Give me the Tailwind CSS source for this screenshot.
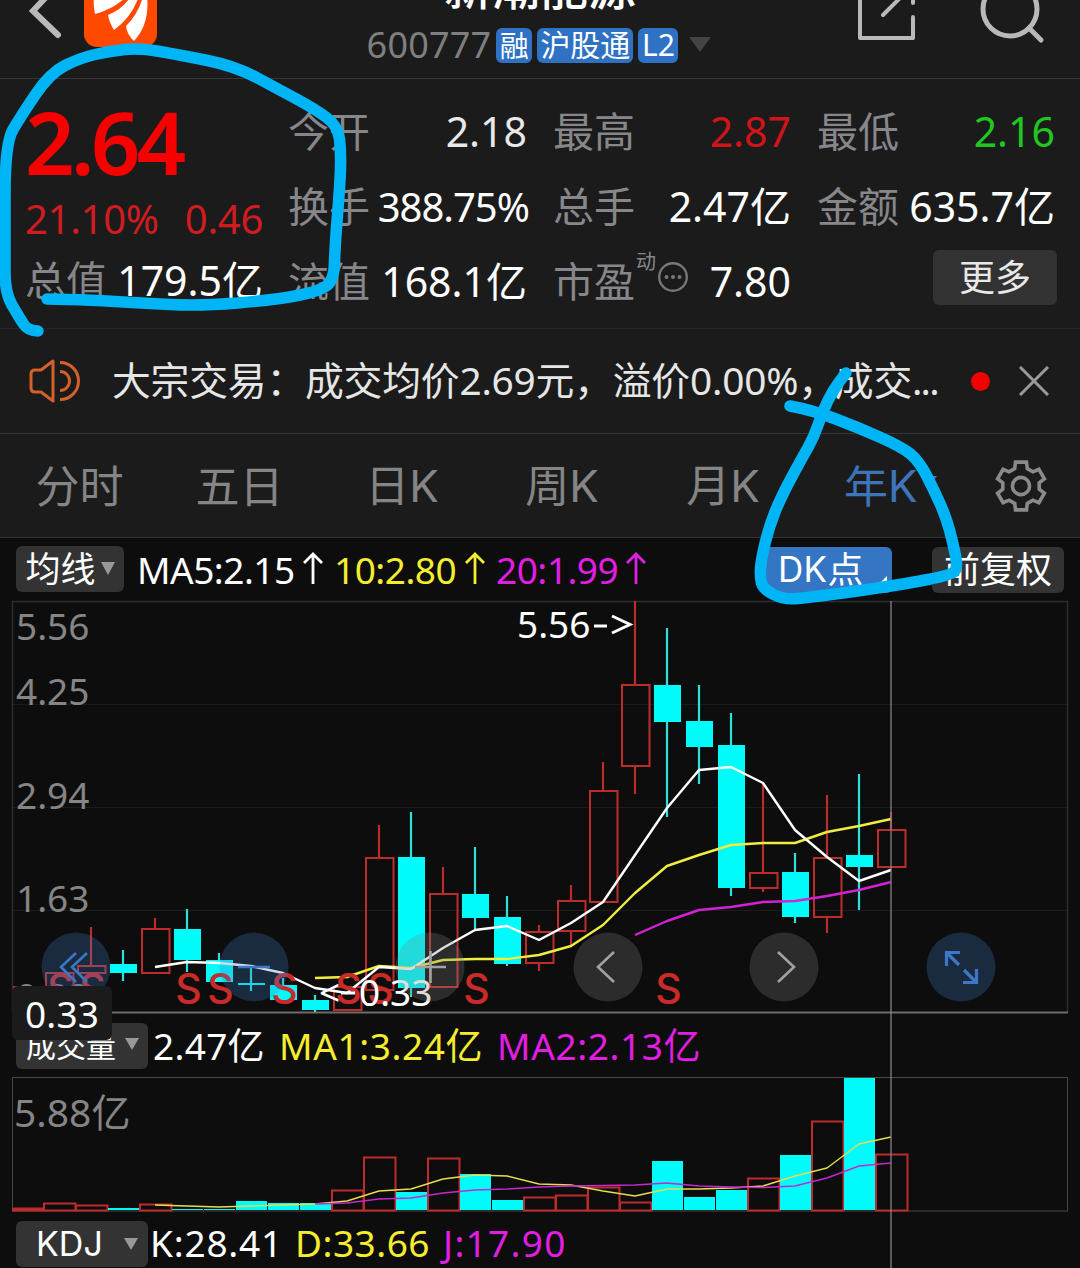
<!DOCTYPE html>
<html lang="zh-CN">
<head>
    <meta charset="UTF-8">
    <meta name="viewport" content="width=device-width, initial-scale=1.0">
    <title>新潮能源 600777</title>
    <script src="https://cdn.jsdelivr.net/npm/@tailwindcss/browser@4"></script>
</head>
<body class="bg-[#0d0d0d]">
    <div class="relative w-[1080px] h-[1268px] overflow-hidden bg-[#0d0d0d] text-white font-['Noto_Sans','Noto_Sans_CJK_SC',sans-serif] whitespace-nowrap">

        <!-- Header -->
        <header class="flex justify-between h-[79px] bg-[#1b1b1b] border-b border-[#383838] overflow-hidden">
            <svg class="w-[360px] h-[78px]" viewBox="0 0 360 78" fill="none">
                <path d="M62 -20L33 11L58 35" stroke="#b9b9b9" stroke-width="6" stroke-linecap="round"/>
                <rect x="84" y="-26" width="73" height="73" rx="13" fill="#ff4800"/>
                <path d="M94 -4Q93 5 95 14Q114 9 127 -4Z" fill="#fff"/>
                <path d="M131 -4Q123 9 108 15Q109 22 114 30Q132 17 139 -4Z" fill="#fff"/>
                <path d="M143 -4Q139 13 126 26Q127 35 134 41Q150 24 147 -4Z" fill="#fff"/>
            </svg>
            <div class="flex flex-col items-center w-[350px] shrink-0">
                <h1 class="text-5xl leading-[60px] h-[60px] -mt-[43px] font-medium">新潮能源</h1>
                <div class="flex items-center mt-[10px] gap-[5px] text-[29px] leading-none">
                    <span class="text-[36px] text-[#7f7f7f] tracking-[0.2px]">600777</span>
                    <span class="flex items-center justify-center w-9 h-[35px] rounded-md bg-[#2f72c4]">融</span>
                    <span class="flex items-center justify-center w-24 h-[35px] rounded-md bg-[#2f72c4] text-[30px]">沪股通</span>
                    <span class="flex items-center justify-center w-10 h-[35px] rounded-md bg-[#2f72c4] text-[30px]">L2</span>
                    <svg class="w-[22px] h-4 ml-[6px] mr-[2px]" viewBox="0 0 22 16"><path d="M0 0H22L11 15Z" fill="#444"/></svg>
                </div>
            </div>
            <svg class="w-[360px] h-[78px]" viewBox="720 0 360 78" fill="none" stroke="#b9b9b9" stroke-width="4" stroke-linecap="round" stroke-linejoin="round">
                <path d="M860 -10V38H913V17M913 -10V3M883 15L905 -7"/>
                <circle cx="1010" cy="9" r="27" stroke-width="5"/>
                <path d="M1029 28L1041 40" stroke-width="5"/>
            </svg>
        </header>

        <!-- Quote -->
        <section class="flex h-[250px] px-[25px] gap-[26px] bg-[#1b1b1b] border-b border-[#272727] text-[41px] leading-none">
            <div class="w-[238px] pt-[23px]">
                <div class="h-[78px] leading-[78px] text-[87px] font-semibold text-[#f60000] tracking-[-4px]">2.64</div>
                <div class="flex justify-between h-[75px] leading-[77px] text-[#d01c20] text-[40px] tracking-[-0.3px]"><span>21.10%</span><span>0.46</span></div>
                <div class="flex justify-between h-[50px] leading-[50px]"><span class="text-[#87878b]">总值</span><span>179.5亿</span></div>
            </div>
            <div class="w-[238px] pt-[15px]">
                <div class="flex justify-between h-[75px] leading-[75px]"><span class="text-[#87878b] -ml-px">今开</span><span class="text-[#e8e8e8]">2.18</span></div>
                <div class="flex justify-between h-[75px] leading-[75px]"><span class="text-[#87878b] -ml-px">换手</span><span class="text-[40px] tracking-[-1px] -mr-[2px]">388.75%</span></div>
                <div class="flex justify-between h-[75px] leading-[75px]"><span class="text-[#87878b] -ml-px">流值</span><span>168.1亿</span></div>
            </div>
            <div class="w-[238px] pt-[15px]">
                <div class="flex justify-between h-[75px] leading-[75px]"><span class="text-[#87878b]">最高</span><span class="text-[#d01418]">2.87</span></div>
                <div class="flex justify-between h-[75px] leading-[75px]"><span class="text-[#87878b]">总手</span><span>2.47亿</span></div>
                <div class="flex h-[75px] leading-[75px]">
                    <span class="text-[#87878b]">市盈</span>
                    <span class="text-xl leading-[36px] text-[#87878b] ml-px">动</span>
                    <svg class="w-8 h-8 mt-[17px] ml-px" viewBox="0 0 32 32" fill="none" stroke="#77777a" stroke-width="2.4">
                        <circle cx="16" cy="16" r="13.8"/>
                        <path d="M9.5 16h.01M16 16h.01M22.5 16h.01" stroke-width="4" stroke-linecap="round"/>
                    </svg>
                    <span class="ml-auto">7.80</span>
                </div>
            </div>
            <div class="w-[238px] pt-[15px]">
                <div class="flex justify-between h-[75px] leading-[75px]"><span class="text-[#87878b]">最低</span><span class="text-[#1fc71f]">2.16</span></div>
                <div class="flex justify-between h-[75px] leading-[75px]"><span class="text-[#87878b]">金额</span><span>635.7亿</span></div>
                <button class="block ml-auto mt-[6px] -mr-[2px] w-[124px] h-[55px] rounded-md bg-[#323232] text-[36px] leading-[54px] text-[#e8e8e8]">更多</button>
            </div>
        </section>

        <!-- News -->
        <section class="flex items-center h-[105px] px-[28px] bg-[#1b1b1b] border-b border-[#363636]">
            <svg class="w-[54px] h-12" viewBox="0 0 54 48" fill="none" stroke="#d4602a" stroke-width="3" stroke-linejoin="round">
                <path d="M25 4L13 13H7Q3 13 3 17V31Q3 35 7 35H13L25 44Z"/>
                <path d="M32 5.500A18.500 18.500 0 0 1 32 42.500M32 14.500A9.500 9.500 0 0 1 32 33.500"/>
            </svg>
            <p class="w-[832px] ml-[30px] text-[38.8px] text-[#e6e6e6] tracking-[-0.2px] -mt-[2px]">大宗交易：<span>成交均价2.69元，</span><span>溢价0.00%，</span><span class="-ml-[2px]">成交</span><span class="tracking-[-1.8px]">...</span></p>
            <span class="w-[19px] h-[19px] ml-[27px] rounded-full bg-[#f40000]"></span>
            <svg class="w-[30px] h-[30px] ml-[29px]" viewBox="0 0 30 30" stroke="#9a9a9a" stroke-width="3"><path d="M1 1L29 29M29 1L1 29"/></svg>
        </section>

        <!-- Period tabs -->
        <nav class="flex items-center h-[104px] bg-[#1b1b1b] border-b border-[#333] text-[44px] leading-none text-[#858585]">
            <span class="w-[159px] text-center">分时</span>
            <span class="w-[161px] text-center">五日</span>
            <span class="w-[164px] text-center">日<span class="font-['Inter']">K</span></span>
            <span class="w-[156px] text-center">周<span class="font-['Inter']">K</span></span>
            <span class="w-[166px] text-center">月<span class="font-['Inter']">K</span></span>
            <span class="flex items-center w-[174px] pl-[38px] text-[#3d74ba]">年<span class="font-['Inter']">K</span><svg class="w-4 h-3 ml-[3px] -mt-2" viewBox="0 0 16 12"><path d="M0 0H16L8 12Z" fill="#3d74ba"/></svg></span>
            <svg class="w-[56px] h-[56px] ml-[13px]" viewBox="-28 -28 56 56" fill="none" stroke="#8a8a8a" stroke-width="3.6">
                <path id="gear"/>
                <circle r="8.6"/>
            </svg>
        </nav>

        <!-- Moving averages -->
        <div class="flex items-center h-[60px] px-4 text-[35px] leading-none">
            <span class="flex items-center justify-center gap-[5px] w-[108px] h-[46px] mt-[1px] rounded-md bg-[#333]">均线<svg class="w-[14px] h-[13px]" viewBox="0 0 14 13"><path d="M0 0H14L7 13Z" fill="#999"/></svg></span>
            <span class="flex items-center justify-between w-[199px] pl-[13px] text-[37px] tracking-[-0.5px] mt-[2px]">MA5:2.15<svg class="w-5 h-8 -mt-[2px]" viewBox="0 0 20 32" fill="none" stroke="currentColor" stroke-width="2.800"><path d="M10 32V2M1 11L10 2L19 11"/></svg></span>
            <span class="flex items-center justify-between w-[162px] pl-[11px] text-[37px] tracking-[-0.5px] mt-[2px] text-[#f5ee30]">10:2.80<svg class="w-5 h-8 -mt-[2px]" viewBox="0 0 20 32" fill="none" stroke="currentColor" stroke-width="2.800"><path d="M10 32V2M1 11L10 2L19 11"/></svg></span>
            <span class="flex items-center justify-between w-[161px] pl-[11px] text-[37px] tracking-[-0.5px] mt-[2px] text-[#e21ee2]">20:1.99<svg class="w-5 h-8 -mt-[2px]" viewBox="0 0 20 32" fill="none" stroke="currentColor" stroke-width="2.800"><path d="M10 32V2M1 11L10 2L19 11"/></svg></span>
            <span class="relative flex items-center w-[130px] h-[46px] mt-[3px] ml-auto pl-[16px] rounded-md bg-[#3475c4] text-[36px] tracking-[0.3px]"><span class="font-['Inter'] text-[35px]">DK</span>点<svg class="absolute right-[5px] bottom-[8px] w-[9px] h-[9px]" viewBox="0 0 9 9"><path d="M9 0V9H0Z" fill="#fff"/></svg></span>
            <span class="flex items-center justify-center w-[132px] h-[46px] mt-[3px] ml-[40px] rounded-md bg-[#333] text-[36px]">前复权</span>
        </div>

        <!-- Candles -->
        <svg class="block w-[1080px] h-[422px]" viewBox="0 598 1080 422" fill="none">
            <path d="M13 704.5H1067M13 807.5H1067M13 910.5H1067" stroke="#1b1b1b"/>
            <path d="M12.5 1012V601.5H1067.5V1012" stroke="#2e2e2e" stroke-width="1.5"/>
            <path d="M12 1012.5H1068" stroke="#6c6c6c" stroke-width="2"/>
            <g font-size="37" fill="#858585">
                <text x="16" y="640">5.56</text>
                <text x="16" y="705">4.25</text>
                <text x="16" y="809">2.94</text>
                <text x="16" y="912">1.63</text>
                <text x="16" y="1010">0.33</text>
            </g>
            <g id="candles"></g>
            <g id="averages"></g>
            <g id="signals" class="font-['Inter']" font-size="41" font-weight="500" fill="#c92b2b" text-anchor="middle"></g>
            <g font-size="37" fill="#fff">
                <text x="517" y="638">5.56</text>
                <text x="319" y="1006">&lt;</text>
                <text x="359" y="1006">0.33</text>
            </g>
            <path d="M594 626H607M612 616L630 624.500L612 633M341 993H355" stroke="#fff" stroke-width="3"/>
            <g fill="#3d7cca" fill-opacity=".27">
                <circle cx="76" cy="967" r="34.5"/><circle cx="254" cy="967" r="34.5"/><circle cx="961" cy="967" r="34.5"/>
            </g>
            <g fill="#808080" fill-opacity=".27">
                <circle cx="430" cy="967" r="34.5"/><circle cx="608" cy="967" r="34.5"/><circle cx="784" cy="967" r="34.5"/>
            </g>
            <g stroke="#3c78c8" stroke-width="2.6">
                <path d="M76 953L61 967L76 982M87 953L72 967L87 982M238 967H270"/>
                <path d="M946.500 966V952.500H960M947 953L959 965M976.500 969V982.500H963M976 982L964 970" stroke-width="3.2"/>
            </g>
            <path d="M614 952L598 967L614 982M778 952L794 967L778 982M415 967H446M430.5 951V983" stroke="#a2a2a2" stroke-width="2.6"/>
        </svg>

        <!-- Volume legend -->
        <div class="relative flex items-center h-[50px] px-4 text-[37px] leading-none tracking-[0.6px]">
            <span class="flex items-center gap-[9px] w-[132px] h-[46px] mt-px pl-[10px] rounded-md bg-[#333] text-[30px] tracking-normal">成交量<svg class="w-[14px] h-[12px] -mt-[4px]" viewBox="0 0 14 12"><path d="M0 0H14L7 12Z" fill="#999"/></svg></span>
            <span class="w-[125px] pl-[5px] tracking-[0.3px]">2.47亿</span>
            <span class="w-[218px] pl-[6px] text-[#f5ee30]">MA1:3.24亿</span>
            <span class="pl-[6px] text-[#e21ee2]">MA2:2.13亿</span>
            <span class="absolute left-[12px] -top-[34px] w-[100px] h-[54px] rounded-md bg-[#1b1b1b] text-[37px] leading-[55px] pl-[13px] tracking-[0.2px]">0.33</span>
        </div>

        <!-- Volume bars -->
        <svg class="block w-[1080px] h-[146px]" viewBox="0 1070 1080 146" fill="none">
            <rect x="12.5" y="1077.5" width="1055" height="133.5" stroke="#484848"/>
            <text x="14" y="1127" font-size="39" fill="#858585">5.88亿</text>
            <g id="volumes"></g>
            <g id="volumeAverages"></g>
        </svg>

        <!-- KDJ legend -->
        <div class="flex items-center h-[56px] px-4 text-[37px] leading-none tracking-[0.8px]">
            <span class="flex items-center justify-between w-[132px] h-[46px] -mt-px pl-[20px] pr-[10px] rounded-md bg-[#333] text-[34px] tracking-normal font-['Inter']">KDJ<svg class="w-[14px] h-[12px]" viewBox="0 0 14 12"><path d="M0 0H14L7 12Z" fill="#999"/></svg></span>
            <span class="w-[144px] pl-[2px] -mt-[3px]">K:28.41</span>
            <span class="w-[147px] pl-[3px] -mt-[3px] tracking-[0.5px] text-[#f5ee30]">D:33.66</span>
            <span class="pl-[4px] -mt-[3px] tracking-[1.3px] text-[#e21ee2]">J:17.90</span>
        </div>

        <!-- Cursor line and hand-drawn marks -->
        <svg class="absolute inset-0 w-[1080px] h-[1268px]" viewBox="0 0 1080 1268" fill="none">
            <path d="M891 601V1268" stroke="#8c8c8c" stroke-opacity=".75" stroke-width="1.6"/>
            <g id="marks" stroke="#00b5f5" stroke-width="11.5" stroke-linecap="round" stroke-linejoin="round"></g>
        </svg>
    </div>

    <script>
        const RED = '#bd2c2c';
        const CYAN = '#00fbfb';

        // [direction, body top, body bottom, high, low], one per year
        const candles = [
            ['up', 987, 1008, 987, 1008], ['up', 973, 1000, 973, 1000], ['up', 966, 973, 927, 973],
            ['down', 964, 973, 950, 981], ['up', 929, 973, 918, 973], ['down', 929, 960, 909, 972],
            ['down', 960, 982, 953, 982], ['down', 983, 985, 968, 991], ['down', 985, 1000, 978, 1000],
            ['down', 1000, 1010, 995, 1012], ['up', 987, 1010, 987, 1010], ['up', 858, 990, 825, 990],
            ['down', 857, 988, 812, 997], ['up', 894, 987, 867, 987], ['down', 894, 918, 847, 929],
            ['down', 917, 964, 896, 966], ['up', 932, 963, 925, 971], ['up', 901, 931, 885, 946],
            ['up', 791, 902, 762, 902], ['up', 685, 766, 601, 794], ['down', 685, 722, 628, 817],
            ['down', 721, 747, 685, 784], ['down', 745, 888, 713, 896], ['up', 873, 888, 784, 892],
            ['down', 872, 917, 853, 923], ['up', 858, 917, 795, 933], ['down', 855, 867, 774, 910],
            ['up', 830, 867, 812, 867]
        ];
        const volumes = [1208, 1203, 1205, 1208, 1204, 1209, 1209, 1201, 1203, 1203, 1190, 1157, 1192, 1158,
            1174, 1200, 1197, 1195, 1187, 1202, 1161, 1197, 1190, 1178, 1155, 1121, 1078, 1154];

        const x = i => 27 + i * 32;
        const line = (ys, start, color, width) =>
            `<polyline points="${ys.map((y, i) => x(i + start) + ',' + y).join(' ')}" stroke="${color}" stroke-width="${width}" stroke-linejoin="round"/>`;

        document.getElementById('candles').innerHTML = candles.map(([dir, top, bottom, high, low], i) => {
            const cx = x(i);
            if (dir === 'down') {
                return `<path d="M${cx} ${high}V${low}" stroke="#2ee0dc" stroke-width="2.2"/>
                    <rect x="${cx - 13}" y="${top}" width="27" height="${bottom - top}" fill="${CYAN}"/>`;
            }
            return `<path d="M${cx} ${high}V${top}M${cx} ${bottom}V${low}" stroke="${RED}" stroke-width="2.2"/>
                <rect x="${cx - 13}" y="${top}" width="27.5" height="${bottom - top}" stroke="${RED}" stroke-width="2"/>`;
        }).join('');

        document.getElementById('averages').innerHTML =
            line([978, 977, 966, 968, 960, 959, 959, 955, 946, 925, 893, 866, 855, 845, 843, 843, 832, 826, 819], 9, '#f0ee40', 2.4) +
            line([935, 921, 910, 907, 902, 901, 896, 890, 882], 19, '#d322d3', 2.4) +
            line([967, 962, 963, 966, 973, 988, 993, 967, 969, 948, 930, 926, 940, 923, 902, 855, 808, 770, 767, 783, 830, 857, 881, 870], 4, '#fff', 2.4);

        document.getElementById('signals').innerHTML = [1, 2, 5, 6, 8, 10, 11, 14, 20]
            .map(i => `<text x="${x(i) + 1.5}" y="1003">S</text>`).join('');

        document.getElementById('volumes').innerHTML = volumes.map((top, i) =>
            candles[i][0] === 'down'
                ? `<rect x="${x(i) - 15}" y="${top}" width="31" height="${1210 - top}" fill="${CYAN}"/>`
                : `<rect x="${x(i) - 15 + (i ? 0 : 1)}" y="${top + 0.5}" width="${i ? 31.5 : 30.5}" height="${1210 - top}" stroke="${RED}" stroke-width="2"/>`
        ).join('');

        document.getElementById('volumeAverages').innerHTML =
            line([1205, 1206, 1207, 1206, 1205, 1204, 1201, 1191, 1189, 1179, 1175, 1176, 1184, 1185, 1191, 1196, 1189, 1189, 1188, 1186, 1176, 1168, 1144, 1137], 4, '#e8dc50', 1.4) +
            line([1204, 1203, 1199, 1198, 1193, 1190, 1189, 1187, 1186, 1185.5, 1185, 1183, 1186, 1187, 1187.5, 1186, 1178, 1166, 1163], 9, '#c428d0', 1.4);

        // Six-tooth cog outline
        const gear = [];
        for (let t = 0; t < 6; t++) {
            [[-20, 18.5], [-13, 24.5], [13, 24.5], [20, 18.5]].forEach(([a, r]) => {
                const rad = (t * 60 + a - 90) * Math.PI / 180;
                gear.push((r * Math.cos(rad)).toFixed(1) + ' ' + (r * Math.sin(rad)).toFixed(1));
            });
        }
        document.getElementById('gear').setAttribute('d', 'M' + gear.join('L') + 'Z');

        // Smooth curve through the midpoints of each stroke
        const smooth = pts => {
            let d = `M${pts[0]}`;
            for (let i = 1; i < pts.length - 1; i++) {
                const [px, py] = pts[i], [nx, ny] = pts[i + 1];
                d += `Q${px} ${py} ${(px + nx) / 2} ${(py + ny) / 2}`;
            }
            return `<path d="${d}L${pts[pts.length - 1]}"/>`;
        };
        document.getElementById('marks').innerHTML = smooth([[38, 331], [28, 331], [19, 317], [5, 293], [5, 250], [5, 143], [21, 116],
            [50, 73], [80, 58], [110, 51], [140, 48], [180, 55], [235, 66], [280, 90], [315, 109], [338, 126], [341, 152],
            [340, 185], [335, 245], [334, 280], [320, 291], [275, 300], [200, 306], [140, 303], [90, 300], [47, 299]]) +
            smooth([[790, 406], [812, 410], [857, 427], [902, 447], [919, 461], [934, 490], [946, 517], [953, 543], [958, 568],
            [951, 575], [905, 584], [850, 592], [812, 597], [784, 600], [763, 589], [760, 577], [761, 560], [769, 527],
            [781, 497], [802, 458], [814, 437], [822, 413], [833, 390], [846, 373]]);
    </script>
</body>
</html>
